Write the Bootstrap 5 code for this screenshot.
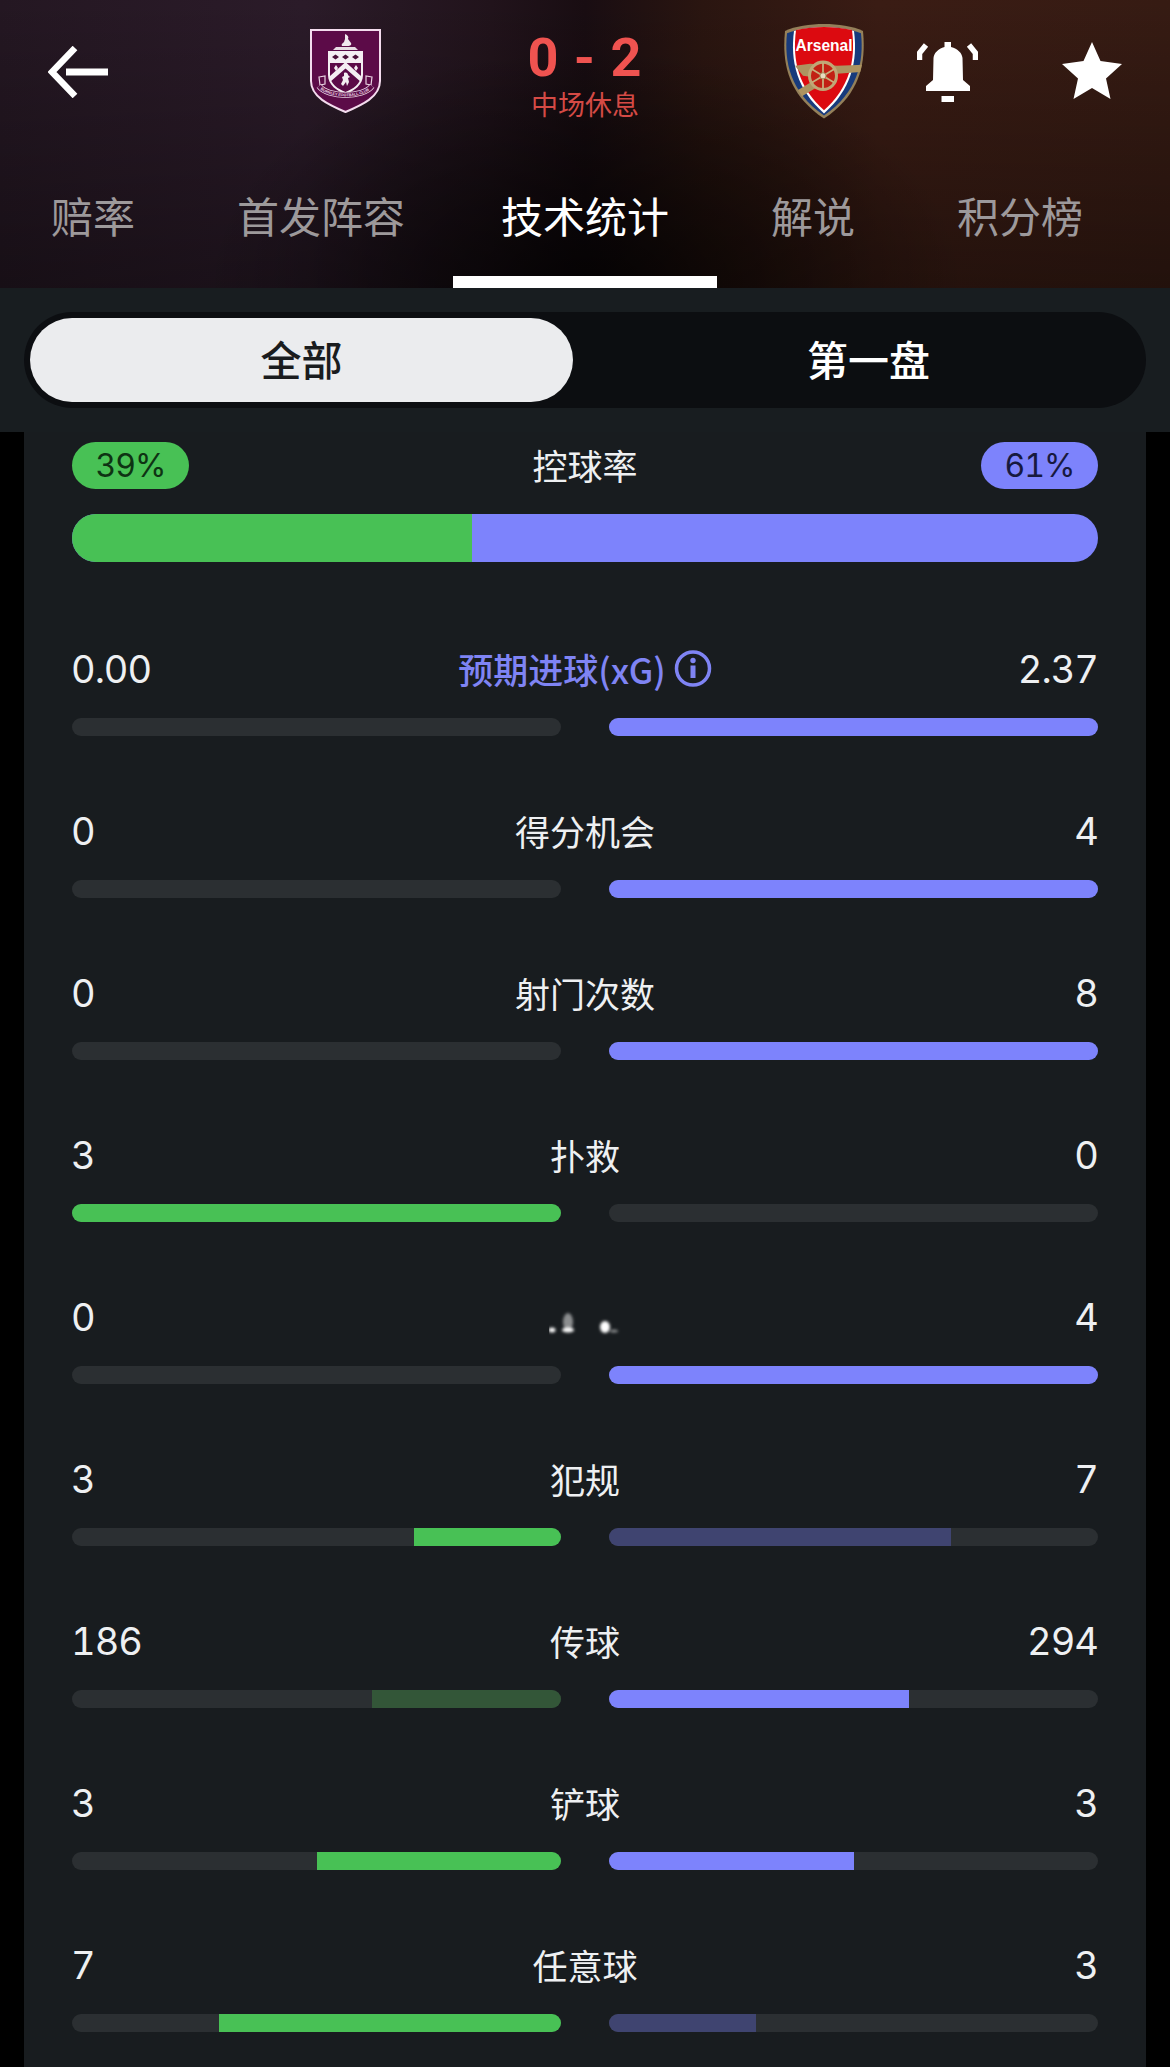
<!DOCTYPE html>
<html lang="zh-CN">
<head>
<meta charset="utf-8">
<title>技术统计</title>
<link rel="stylesheet" href="https://cdn.jsdelivr.net/npm/bootstrap@5.3.0/dist/css/bootstrap.min.css">
<style>
html,body{background:#000;margin:0;}
body{width:1170px;height:2067px;overflow:hidden;font-family:Inter,"Noto Sans CJK SC",sans-serif;color:#eef0f2;}
.top-head{height:288px;background:
  radial-gradient(ellipse 380px 240px at 50% 100%,rgba(0,0,0,.7) 0%,rgba(0,0,0,0) 100%),
  linear-gradient(180deg,rgba(0,0,0,0) 0%,rgba(0,0,0,.36) 100%),
  linear-gradient(90deg,#241722 0%,#2b1b29 26%,#21131b 42%,#190d12 50%,#2a1510 60%,#3a1c14 75%,#361b13 100%);}
.top-row{height:144px;}
.back-ico{width:60px;height:52px;margin-left:48px;}
.crest-b{width:71px;height:84px;margin-left:202px;margin-top:-3px;}
.score-box{width:402px;padding-left:6px;padding-top:3px;}
.score-num{font:700 54px/60px Roboto,sans-serif;color:#ef5350;letter-spacing:1px;}
.score-sub{font:400 27px/32px "Noto Sans CJK SC",sans-serif;color:#d44a45;}
.crest-a{width:82px;height:95px;margin-top:-1px;}
.bell-ico{width:61px;height:60px;margin-left:52px;}
.star-ico{width:60px;height:57px;margin-left:84px;margin-top:-3px;}
.tab-nav{margin-top:41px;padding-left:3px;flex-wrap:nowrap;}
.tab-nav .nav-link{font:400 42px/60px "Noto Sans CJK SC",sans-serif;color:#9d999b;padding:0 48px 31px;border-bottom:12px solid transparent;border-radius:0;background:none;}
.tab-nav .nav-link.active{color:#fff;border-bottom-color:#fff;background:none;}
.gap-r{margin-right:6px;}
.filter-band{height:144px;background:#181d20;padding:24px 24px;}
.seg-wrap{height:96px;background:#0c0e11;border-radius:48px;padding:6px;gap:24px;flex-wrap:nowrap;}
.seg-wrap .nav-link{height:84px;border-radius:42px;font:500 41px/80px "Noto Sans CJK SC",sans-serif;padding:0 0 4px;color:#fff;text-align:center;}
.seg-wrap .nav-link.active{background:#ebecee;color:#1a1c1e;}
.stat-card{margin:0 24px;height:1635px;background:#181c1f;padding:10px 48px 0;}
.head-grid{display:grid;grid-template-columns:1fr auto 1fr;align-items:center;height:47px;}
.pct-tag{display:block;font:400 32px/47px Inter,sans-serif;font-variant-numeric:tabular-nums;height:47px;width:117px;padding:0;border-radius:24px;letter-spacing:-1px;}
.tag-g{background:#48c155;color:#0e3313;}
.tag-b{background:#7d83fc;color:#17193f;margin-left:auto;}
.stat-name{font:400 35px/45px "Noto Sans CJK SC",sans-serif;padding-bottom:2px;color:#eef0f2;text-align:center;}
.big-track{height:48px;border-radius:24px;margin-top:25px;margin-bottom:84px;background:#7d83fc;}
.fill-g{background:#48c155;}
.fill-b{background:#7d83fc;}
.fill-gd{background:#335638;}
.fill-bd{background:#3f4470;}
.stat-line{margin-bottom:72px;}
.stat-line:last-child{margin-bottom:0;}
.stat-val{font:400 38px/47px Inter,sans-serif;font-variant-numeric:tabular-nums;letter-spacing:-1px;margin-left:-1px;color:#eef0f2;}
.bars{gap:48px;margin-top:25px;}
.thin-track{flex:1 1 0;height:18px;border-radius:9px;background:#2b2f32;}
.xg-name{color:#7f84f4;gap:8px;font-weight:500;}
.info-ico{width:38px;height:37px;}
.smudge{width:72px;height:45px;margin:0 auto;display:block;}
</style>
</head>
<body>
<header class="top-head">
  <div class="top-row d-flex align-items-center">
    <svg class="back-ico" viewBox="0 0 60 52" fill="none" stroke="#fff" stroke-width="7">
      <path d="M27 2 L4 26 L27 50" stroke-width="6.500"/><path d="M18 26 H60"/>
    </svg>
    <svg class="crest-b" viewBox="0 0 71 84">
      <path d="M1 1 H70 V52 C70 68 52 76 35.500 83 C19 76 1 68 1 52 Z" fill="#5c0b48" stroke="#f4dcee" stroke-width="2"/>
      <path d="M35 5 c3 1 4 3 3 5 l3 4 c1 2 -1 3 -3 3 h-6 c-1 -2 1 -3 2 -4 l1 -3 z" fill="#f0e8ee"/>
      <path d="M26 18 h19 l3 3 H23 Z" fill="#e8dde4"/>
      <path d="M18 22 H53 V34 H18 Z" fill="#f4eef2"/>
      <path d="M18 34 H20 V46 C20 55 28 60 35.500 63 C43 60 51 55 51 46 V34 H53 V46 C53 56 44 62 35.500 65 C27 62 18 56 18 46 Z" fill="#f4eef2"/>
      <path d="M20 47 L35.500 33 L51 47 V53 L35.500 39.500 L20 53 Z" fill="#f4eef2"/>
      <path d="M22 28 l3.500 -2.500 l3.500 2.500 l-3.500 2.500z M32 28 l3.500 -2.500 l3.500 2.500 l-3.500 2.500z M42 28 l3.500 -2.500 l3.500 2.500 l-3.500 2.500z" fill="#4a1038"/>
      <path d="M24 39 l2 -3 l2 3 l-2 3z M44 39 l2 -3 l2 3 l-2 3z" fill="#f4eef2"/>
      <path d="M34 44 c2 -1 4 0 4 2 l2 2 l-2 1 l1 4 l-2 4 l-1 -4 l-3 4 l-2 -2 l2 -4 l-1 -3 l2 -1z" fill="#f4eef2"/>
      <path d="M9 48 l6 -1 v8 l-5 1z M62 48 l-6 -1 v8 l5 1z" fill="none" stroke="#e8d3e2" stroke-width="1.200"/>
      <path id="ribbonB" d="M9 57 C18 69 53 69 62 57" fill="none" stroke="#e8d3e2" stroke-width="6"/>
      <path d="M9 57 C18 69 53 69 62 57" fill="none" stroke="#5c0b48" stroke-width="4.400"/>
      <text font-family="Liberation Sans,sans-serif" font-size="3.800" font-weight="700" fill="#f0dfea" dy="1.300"><textPath href="#ribbonB" startOffset="3" textLength="50">BURNLEY FOOTBALL CLUB</textPath></text>
    </svg>
    <div class="score-box text-center">
      <div class="score-num">0 - 2</div>
      <div class="score-sub">中场休息</div>
    </div>
    <svg class="crest-a" viewBox="0 1 82 93.500" preserveAspectRatio="none">
      <defs><clipPath id="shA"><path d="M41 1 C55 1 70 3 80 8 C83 38 78 70 41 94 C4 70 -1 38 2 8 C12 3 27 1 41 1 Z"/></clipPath></defs>
      <path d="M41 1 C55 1 70 3 80 8 C83 38 78 70 41 94 C4 70 -1 38 2 8 C12 3 27 1 41 1 Z" fill="#94805a"/>
      <path d="M41 4 C53 4 67 6 78 10 C81 38 75 68 41 91 C7 68 1 38 4 10 C15 6 29 4 41 4 Z" fill="#173a7c"/>
      <path d="M41 4 C51 4 62 5 71 8 C75 38 68 66 41 89 C14 66 7 38 11 8 C20 5 31 4 41 4 Z" fill="#fff"/>
      <path d="M41 4 C50 4 60 5 69 7 C73 38 66 64 41 86 C16 64 9 38 13 7 C22 5 32 4 41 4 Z" fill="#dc0a10"/>
      <text x="41" y="28" text-anchor="middle" font-family="Liberation Sans,sans-serif" font-size="17" font-weight="700" fill="#fff" textLength="57" lengthAdjust="spacingAndGlyphs">Arsenal</text>
      <g clip-path="url(#shA)">
        <path d="M30 57 L15 66 L19 72 L36 62 Z" fill="#ad9360"/>
        <path d="M12 42 L27 40 L54 42 L81 41 V48 L54 50 L40 53 L27 53 L20 52 Z" fill="#ad9360"/>
      </g>
      <circle cx="40" cy="52" r="13.500" fill="#c22014" stroke="#c0a676" stroke-width="3"/>
      <g stroke="#c8ae7c" stroke-width="1.800">
        <path d="M40 39 V65 M29 45.500 L51 58.500 M29 58.500 L51 45.500"/>
      </g>
      <circle cx="40" cy="52" r="3" fill="#e8dcc0" stroke="#a58a58"/>
    </svg>
    <svg class="bell-ico" viewBox="0 0 61 60" fill="#fff">
      <path d="M27.500 0 H34 V5 C41 7 45 11 45.500 16 L46 38 L53 44 V49 H9 V44 L16 38 L16.500 16 C17 11 21 7 27.500 5 Z"/>
      <rect x="24.500" y="54" width="12.500" height="6"/>
      <path d="M2.500 18 V11 L9 3 M58.500 18 V11 L52 3" fill="none" stroke="#fff" stroke-width="5.500"/>
    </svg>
    <svg class="star-ico" viewBox="0 0 60 57" fill="#fff">
      <path d="M30 0 L38.500 19 L60 22 L44 36.500 L48.500 57 L30 46 L11.500 57 L16 36.500 L0 22 L21.500 19 Z"/>
    </svg>
  </div>
  <nav class="nav tab-nav">
    <a class="nav-link gap-r" href="#">赔率</a>
    <a class="nav-link" href="#">首发阵容</a>
    <a class="nav-link active gap-r" href="#">技术统计</a>
    <a class="nav-link gap-r" href="#">解说</a>
    <a class="nav-link" href="#">积分榜</a>
  </nav>
</header>

<div class="filter-band">
  <nav class="nav nav-pills nav-justified seg-wrap">
    <a class="nav-link active" href="#">全部</a>
    <a class="nav-link" href="#">第一盘</a>
  </nav>
</div>

<main class="stat-card">
  <div class="head-grid">
    <div><span class="badge pct-tag tag-g">39%</span></div>
    <div class="stat-name">控球率</div>
    <div><span class="badge pct-tag tag-b">61%</span></div>
  </div>
  <div class="progress big-track"><div class="progress-bar fill-g" style="width:39%"></div></div>

  <div class="stat-line">
    <div class="head-grid"><div class="stat-val">0.00</div>
      <div class="stat-name xg-name d-flex align-items-center">预期进球(xG)
        <svg class="info-ico" viewBox="0 0 38 37" fill="none"><circle cx="19" cy="18.500" r="16.500" stroke="#7f84f4" stroke-width="3.500"/><rect x="16.500" y="15.500" width="5" height="12.500" fill="#7f84f4"/><circle cx="19" cy="10.500" r="2.700" fill="#7f84f4"/></svg>
      </div>
      <div class="stat-val text-end">2.37</div></div>
    <div class="bars d-flex">
      <div class="progress thin-track justify-content-end"></div>
      <div class="progress thin-track"><div class="progress-bar fill-b" style="width:100%"></div></div>
    </div>
  </div>

  <div class="stat-line">
    <div class="head-grid"><div class="stat-val">0</div><div class="stat-name">得分机会</div><div class="stat-val text-end">4</div></div>
    <div class="bars d-flex">
      <div class="progress thin-track justify-content-end"></div>
      <div class="progress thin-track"><div class="progress-bar fill-b" style="width:100%"></div></div>
    </div>
  </div>

  <div class="stat-line">
    <div class="head-grid"><div class="stat-val">0</div><div class="stat-name">射门次数</div><div class="stat-val text-end">8</div></div>
    <div class="bars d-flex">
      <div class="progress thin-track justify-content-end"></div>
      <div class="progress thin-track"><div class="progress-bar fill-b" style="width:100%"></div></div>
    </div>
  </div>

  <div class="stat-line">
    <div class="head-grid"><div class="stat-val">3</div><div class="stat-name">扑救</div><div class="stat-val text-end">0</div></div>
    <div class="bars d-flex">
      <div class="progress thin-track justify-content-end"><div class="progress-bar fill-g" style="width:100%"></div></div>
      <div class="progress thin-track"></div>
    </div>
  </div>

  <div class="stat-line">
    <div class="head-grid"><div class="stat-val">0</div>
      <div class="stat-name">
        <svg class="smudge" viewBox="0 0 72 45">
          <defs><filter id="blurS" x="-30%" y="-30%" width="160%" height="160%"><feGaussianBlur stdDeviation="1.800"/></filter></defs>
          <g fill="#fff" filter="url(#blurS)">
            <ellipse cx="3" cy="36" rx="3.500" ry="2.500"/><ellipse cx="19" cy="28" rx="5" ry="9" opacity=".5"/><ellipse cx="19" cy="36" rx="6" ry="2.500"/><ellipse cx="56" cy="33" rx="5" ry="6"/><ellipse cx="65" cy="37" rx="4" ry="1.500" opacity=".5"/>
          </g>
        </svg>
      </div>
      <div class="stat-val text-end">4</div></div>
    <div class="bars d-flex">
      <div class="progress thin-track justify-content-end"></div>
      <div class="progress thin-track"><div class="progress-bar fill-b" style="width:100%"></div></div>
    </div>
  </div>

  <div class="stat-line">
    <div class="head-grid"><div class="stat-val">3</div><div class="stat-name">犯规</div><div class="stat-val text-end">7</div></div>
    <div class="bars d-flex">
      <div class="progress thin-track justify-content-end"><div class="progress-bar fill-g" style="width:30%"></div></div>
      <div class="progress thin-track"><div class="progress-bar fill-bd" style="width:70%"></div></div>
    </div>
  </div>

  <div class="stat-line">
    <div class="head-grid"><div class="stat-val">186</div><div class="stat-name">传球</div><div class="stat-val text-end">294</div></div>
    <div class="bars d-flex">
      <div class="progress thin-track justify-content-end"><div class="progress-bar fill-gd" style="width:38.750%"></div></div>
      <div class="progress thin-track"><div class="progress-bar fill-b" style="width:61.250%"></div></div>
    </div>
  </div>

  <div class="stat-line">
    <div class="head-grid"><div class="stat-val">3</div><div class="stat-name">铲球</div><div class="stat-val text-end">3</div></div>
    <div class="bars d-flex">
      <div class="progress thin-track justify-content-end"><div class="progress-bar fill-g" style="width:50%"></div></div>
      <div class="progress thin-track"><div class="progress-bar fill-b" style="width:50%"></div></div>
    </div>
  </div>

  <div class="stat-line">
    <div class="head-grid"><div class="stat-val">7</div><div class="stat-name">任意球</div><div class="stat-val text-end">3</div></div>
    <div class="bars d-flex">
      <div class="progress thin-track justify-content-end"><div class="progress-bar fill-g" style="width:70%"></div></div>
      <div class="progress thin-track"><div class="progress-bar fill-bd" style="width:30%"></div></div>
    </div>
  </div>
</main>
<script src="https://cdn.jsdelivr.net/npm/bootstrap@5.3.0/dist/js/bootstrap.bundle.min.js"></script>
</body>
</html>
